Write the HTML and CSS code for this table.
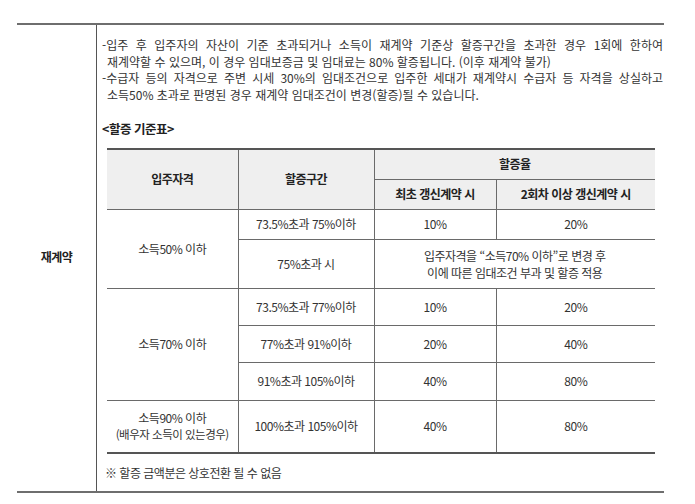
FILE: index.html
```html
<!DOCTYPE html>
<html lang="ko">
<head>
<meta charset="utf-8">
<link rel="stylesheet" href="styles.css">
</head>
<body>
<div class="section">
  <div class="label">재계약</div>
  <div class="content">
    <p class="item"><span class="jl">-입주 후 입주자의 자산이 기준 초과되거나 소득이 재계약 기준상 할증구간을 초과한 경우 1회에 한하여</span><span class="ln">재계약할 수 있으며, 이 경우 임대보증금 및 임대료는 80% 할증됩니다. (이후 재계약 불가)</span></p>
    <p class="item"><span class="jl">-수급자 등의 자격으로 주변 시세 30%의 임대조건으로 입주한 세대가 재계약시 수급자 등 자격을 상실하고</span><span class="ln">소득50% 초과로 판명된 경우 재계약 임대조건이 변경(할증)될 수 있습니다.</span></p>
    <h3 class="title">&lt;할증 기준표&gt;</h3>
    <table class="rate">
      <colgroup><col class="c1"><col class="c2"><col class="c3"><col class="c4"></colgroup>
      <thead>
        <tr class="h1"><th rowspan="2">입주자격</th><th rowspan="2">할증구간</th><th colspan="2">할증율</th></tr>
        <tr class="h2"><th>최초 갱신계약 시</th><th>2회차 이상 갱신계약 시</th></tr>
      </thead>
      <tbody>
        <tr class="r30"><td rowspan="2" class="grp">소득50% 이하</td><td>73.5%초과 75%이하</td><td>10%</td><td>20%</td></tr>
        <tr class="r49"><td>75%초과 시</td><td colspan="2" class="note2">입주자격을 “소득70% 이하”로 변경 후<br>이에 따른 임대조건 부과 및 할증 적용</td></tr>
        <tr class="r37"><td rowspan="3" class="grp">소득70% 이하</td><td>73.5%초과 77%이하</td><td>10%</td><td>20%</td></tr>
        <tr class="r37"><td>77%초과 91%이하</td><td>20%</td><td>40%</td></tr>
        <tr class="r38"><td>91%초과 105%이하</td><td>40%</td><td>80%</td></tr>
        <tr class="r53 last"><td class="grp two">소득90% 이하<br><span class="small">(배우자 소득이 있는경우)</span></td><td>100%초과 105%이하</td><td>40%</td><td>80%</td></tr>
      </tbody>
    </table>
    <p class="foot">※ 할증 금액분은 상호전환 될 수 없음</p>
  </div>
</div>
</body>
</html>
```

FILE: styles.css
```css
html, body {
  margin: 0;
  padding: 0;
  background: #fff;
}
body {
  font-family: "Noto Sans CJK KR", "Noto Sans", sans-serif;
  color: #333;
  font-size: 12px;
}
.section {
  margin: 23px 0 0 17px;
  width: 647px;
  display: grid;
  grid-template-columns: 80px 1fr;
  border-top: 2px solid #6e6e6e;
  border-bottom: 2px solid #6e6e6e;
}
.label {
  border-right: 1px solid #555;
  display: flex;
  align-items: center;
  justify-content: center;
  font-weight: bold;
  color: #222;
  letter-spacing: -0.5px;
  padding-bottom: 4px;
}
.content {
  padding: 12px 1px 10px 5px;
}
.item {
  margin: 0;
  line-height: 16.5px;
  letter-spacing: 0;
}
.item .jl {
  display: block;
  text-align: justify;
  text-align-last: justify;
  white-space: nowrap;
}
.item .ln {
  display: block;
  padding-left: 5px;
  white-space: nowrap;
}
.title {
  margin: 17px 0 0 0;
  font-size: 12.5px;
  line-height: 18px;
  font-weight: bold;
  color: #222;
  letter-spacing: -0.5px;
}
.rate {
  margin: 10px 0 0 5px;
  width: 548px;
  border-collapse: collapse;
  table-layout: fixed;
  letter-spacing: -0.5px;
}
.c1 { width: 131px; }
.c2 { width: 136px; }
.c3 { width: 122px; }
.c4 { width: 159px; }
.rate th, .rate td {
  border: 1px solid #6a6a6a;
  text-align: center;
  vertical-align: middle;
  padding: 0;
  line-height: 16px;
}
.rate tr > :first-child { border-left: none; }
.rate tr > :last-child { border-right: none; }
.rate th {
  background: #efefef;
  font-weight: bold;
  color: #222;
}
.rate thead tr.h1 th { border-top: 2px solid #555; }
.rate thead tr.h1 th[colspan] { border-right: none; }
.rate tbody tr:first-child td { border-top: 1px solid #444; }
.rate td { color: #333; }
.rate .grp { border-right: 1px solid #6a6a6a; border-left: none; }
.rate .note2 { border-right: none; line-height: 17px; }
.h1 { height: 30px; }
.h2 { height: 30px; }
.r30 { height: 30px; }
.r49 { height: 49px; }
.r37 { height: 37px; }
.r38 { height: 38px; }
.r53 { height: 53px; }
.rate tr.last td { border-bottom: 2px solid #555; }
.two { line-height: 18px; }
.small { font-size: 11.5px; }
.foot {
  margin: 11px 0 0 3px;
  line-height: 16px;
  letter-spacing: -0.5px;
}
```
